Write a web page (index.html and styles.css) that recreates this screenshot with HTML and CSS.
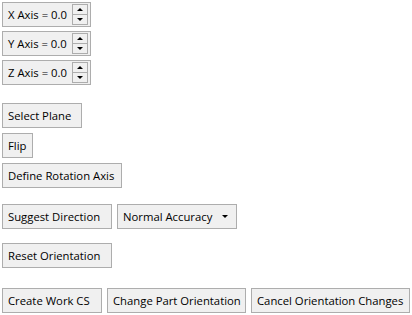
FILE: index.html
```html
<!DOCTYPE html>
<html lang="en">
<head>
    <meta charset="utf-8" />
    <title>Part Orientation</title>
    <link rel="stylesheet" href="styles.css">
</head>
<body>
    <div class="panel">
        <div class="axes">
            <div class="spin">
                <span class="spin-label">X Axis = 0.0</span>
                <span class="spin-arrows"><span class="up"></span><span class="down"></span></span>
            </div>
            <div class="spin">
                <span class="spin-label">Y Axis = 0.0</span>
                <span class="spin-arrows"><span class="up"></span><span class="down"></span></span>
            </div>
            <div class="spin">
                <span class="spin-label">Z Axis = 0.0</span>
                <span class="spin-arrows"><span class="up"></span><span class="down"></span></span>
            </div>
        </div>

        <div class="group">
            <button class="btn w-select">Select Plane</button>
            <button class="btn w-flip">Flip</button>
            <button class="btn w-define">Define Rotation Axis</button>
        </div>

        <div class="row suggest-row">
            <button class="btn w-suggest">Suggest Direction</button>
            <div class="combo">Normal Accuracy <span class="caret"></span></div>
        </div>

        <div class="row reset-row">
            <button class="btn w-suggest">Reset Orientation</button>
        </div>

        <div class="row bottom-row">
            <button class="btn w-create">Create Work CS</button>
            <button class="btn w-change">Change Part Orientation</button>
            <button class="btn w-cancel">Cancel Orientation Changes</button>
        </div>
    </div>
</body>
</html>
```

FILE: styles.css
```css
* {
    margin: 0;
    padding: 0;
    box-sizing: border-box;
}

body {
    background: #ffffff;
    font-family: "Open Sans", "Noto Sans", sans-serif;
    font-size: 11.3px;
    color: #000000;
}

.panel {
    display: flex;
    flex-direction: column;
    align-items: flex-start;
    padding: 2px 0 0 2px;
}

.axes {
    display: flex;
    flex-direction: column;
    gap: 4px;
}

.spin {
    display: flex;
    align-items: center;
    width: 89px;
    height: 25px;
    background: #f0f0f0;
    border: 1px solid #adadad;
    padding-left: 5px;
    white-space: nowrap;
}

.spin-label {
    flex: 1;
}

.spin-arrows {
    display: flex;
    flex-direction: column;
    width: 16px;
    height: 21px;
    margin-right: 2px;
    border: 1px solid #adadad;
    background: #f0f0f0;
}

.spin-arrows span {
    flex: 1;
    display: flex;
    align-items: center;
    justify-content: center;
}

.spin-arrows .up {
    border-bottom: 1px solid #adadad;
}

.spin-arrows .up::before {
    content: "";
    border-left: 3px solid transparent;
    border-right: 3px solid transparent;
    border-bottom: 3px solid #000;
}

.spin-arrows .down::before {
    content: "";
    border-left: 3px solid transparent;
    border-right: 3px solid transparent;
    border-top: 3px solid #000;
}

.btn {
    display: flex;
    align-items: center;
    height: 25px;
    background: #f0f0f0;
    border: 1px solid #adadad;
    padding-left: 5px;
    font: inherit;
    color: inherit;
    text-align: left;
    white-space: nowrap;
}

.group {
    display: flex;
    flex-direction: column;
    gap: 5px;
    margin-top: 18px;
}

.w-select { width: 80px; }
.w-flip { width: 31px; }
.w-define { width: 120px; }
.w-suggest { width: 110px; }
.w-create { width: 100px; }
.w-change { width: 139px; }
.w-cancel { width: 159px; }

.row {
    display: flex;
    gap: 5px;
}

.suggest-row {
    margin-top: 16px;
}

.reset-row {
    margin-top: 14px;
}

.bottom-row {
    margin-top: 20px;
}

.combo {
    display: flex;
    align-items: center;
    width: 120px;
    height: 25px;
    background: #f0f0f0;
    border: 1px solid #adadad;
    padding-left: 5px;
    white-space: nowrap;
}

.caret {
    margin-left: auto;
    margin-right: 8px;
    border-left: 3px solid transparent;
    border-right: 3px solid transparent;
    border-top: 3px solid #000;
}
```
